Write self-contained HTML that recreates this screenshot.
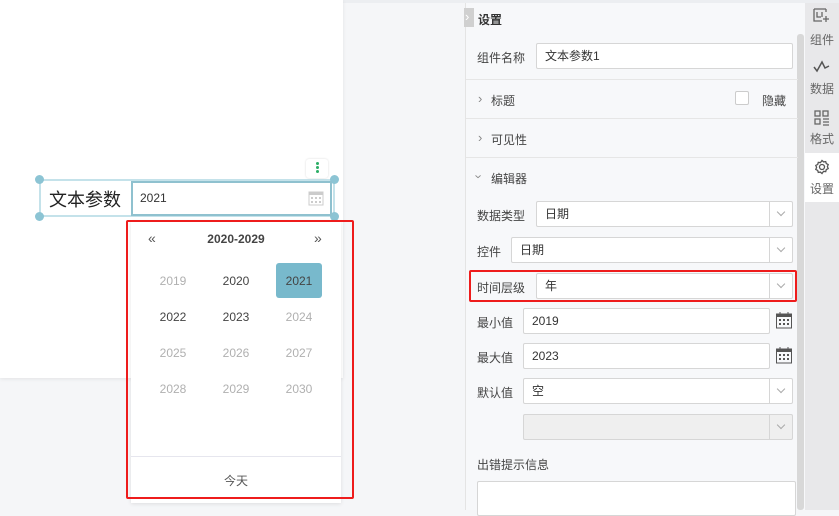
<!DOCTYPE html>
<html><head><meta charset="utf-8"><style>
*{box-sizing:border-box;margin:0;padding:0}
body{width:839px;height:510px;overflow:hidden;background:#f5f6f8;font-family:"Liberation Sans","Noto Sans CJK SC",sans-serif;font-size:12px;color:#333;position:relative}
.a{position:absolute}
.card{left:0;top:0;width:343px;height:378px;background:#fff;box-shadow:0 1px 4px rgba(0,0,0,.08)}
.inp{position:absolute;background:#fff;border:1px solid #d6d6d6;border-radius:2px;font-size:12px;color:#333;padding-left:8px;line-height:25px}
.sel .ar{position:absolute;right:0;top:0;bottom:0;width:23px;border-left:1px solid #d6d6d6}
.sel .ar:after{content:"";position:absolute;left:8px;top:7px;width:5px;height:5px;border-right:1px solid #aaa;border-bottom:1px solid #aaa;transform:rotate(45deg)}
.lbl{position:absolute;font-size:12px;color:#444}
.div{position:absolute;left:466px;width:332px;height:1px;background:#e6e6e6}
.yr{position:absolute;width:46px;text-align:center;font-size:12px;line-height:16px}
.g{color:#b0b0b0}.d{color:#444}
.h{position:absolute;width:9px;height:9px;border-radius:50%;background:#8cc4d4}
.chev{position:absolute;font-size:13px;color:#888}
.tab{position:absolute;left:805px;width:34px;text-align:center;font-size:12px;color:#666}
</style></head><body>
<div class="a" style="left:0;top:0;width:839px;height:3px;background:#eceef1"></div>
<div class="a card"></div>
<div class="a" style="left:39px;top:179px;width:296px;height:38px;border:2px solid #c4e2ea"></div>
<div class="h" style="left:35px;top:175px"></div><div class="h" style="left:330px;top:175px"></div>
<div class="h" style="left:35px;top:212px"></div><div class="h" style="left:330px;top:212px"></div>
<div class="a" style="left:49px;top:186px;font-size:18px;color:#222">文本参数</div>
<div class="a" style="left:131px;top:181px;width:201px;height:35px;border:2px solid #8fc1cf;background:#fff;padding-left:7px;line-height:31px;font-size:12px">2021</div>
<svg class="a" style="left:308px;top:190px" width="16" height="16" viewBox="0 0 16 16"><rect x="1" y="2" width="14" height="13" fill="none" stroke="#ccc"/><rect x="1" y="2" width="14" height="3" fill="#ccc"/><g fill="#ccc"><rect x="3" y="7" width="2" height="2"/><rect x="7" y="7" width="2" height="2"/><rect x="11" y="7" width="2" height="2"/><rect x="3" y="11" width="2" height="2"/><rect x="7" y="11" width="2" height="2"/><rect x="11" y="11" width="2" height="2"/></g></svg>
<div class="a" style="left:306px;top:159px;width:22px;height:19px;background:#fff;border-radius:3px;box-shadow:0 0 2px rgba(0,0,0,.15)"></div>
<div class="a" style="left:316px;top:162px;width:3px;height:3px;border-radius:50%;background:#2bae66;box-shadow:0 4px 0 #2bae66,0 8px 0 #2bae66"></div>
<div class="a" style="left:131px;top:221px;width:210px;height:282px;background:#fff;box-shadow:0 1px 4px rgba(0,0,0,.1)"></div>
<div class="a" style="left:126px;top:220px;width:228px;height:279px;border:2px solid #ee1c1c;border-radius:2px"></div>
<div class="a" style="left:148px;top:230px;font-size:14px;color:#555">«</div>
<div class="a" style="left:314px;top:230px;font-size:14px;color:#555">»</div>
<div class="a" style="left:131px;top:232px;width:210px;text-align:center;font-weight:bold;font-size:12px;color:#444">2020-2029</div>
<div class="a" style="left:276px;top:263px;width:46px;height:35px;background:#78b9cc;border-radius:3px"></div>
<div class="yr g" style="left:150px;top:273px">2019</div><div class="yr d" style="left:213px;top:273px">2020</div><div class="yr d" style="left:276px;top:273px">2021</div>
<div class="yr d" style="left:150px;top:309px">2022</div><div class="yr d" style="left:213px;top:309px">2023</div><div class="yr g" style="left:276px;top:309px">2024</div>
<div class="yr g" style="left:150px;top:345px">2025</div><div class="yr g" style="left:213px;top:345px">2026</div><div class="yr g" style="left:276px;top:345px">2027</div>
<div class="yr g" style="left:150px;top:381px">2028</div><div class="yr g" style="left:213px;top:381px">2029</div><div class="yr g" style="left:276px;top:381px">2030</div>
<div class="a" style="left:131px;top:456px;width:210px;height:1px;background:#e6e6ee"></div>
<div class="a" style="left:131px;top:472px;width:210px;text-align:center;color:#555">今天</div>
<div class="a" style="left:465px;top:3px;width:340px;height:507px;background:#f7f8fa;border-left:1px solid #e4e4e4"></div>
<div class="a" style="left:464px;top:8px;width:10px;height:19px;background:#d0d0d0"></div>
<div class="a" style="left:465px;top:9px;color:#fff;font-size:13px">›</div>
<div class="a" style="left:478px;top:11px;font-size:12px;color:#333;font-weight:bold">设置</div>
<div class="a" style="left:797px;top:34px;width:7px;height:476px;background:#d8d8d8;border-radius:3px"></div>
<div class="a" style="left:805px;top:3px;width:34px;height:507px;background:#e8e8ea"></div>
<div class="a" style="left:805px;top:153px;width:34px;height:49px;background:#fff"></div>
<svg class="a" style="left:813px;top:7px" width="18" height="16" viewBox="0 0 18 16" fill="none" stroke="#666" stroke-width="1.3"><path d="M1 2h12M1 2v12h8M4 5v5h4M9 5v5M13 9v6M10 12h6M13 2v3"/></svg>
<div class="tab" style="top:31px">组件</div>
<svg class="a" style="left:813px;top:60px" width="18" height="14" viewBox="0 0 18 14" fill="none" stroke="#555" stroke-width="1.5"><path d="M1 7l3 4 5-9 3 6 4-2"/></svg>
<div class="tab" style="top:80px">数据</div>
<svg class="a" style="left:813px;top:109px" width="18" height="18" viewBox="0 0 18 18" fill="none" stroke="#666" stroke-width="1.3"><rect x="2" y="2" width="5" height="5"/><rect x="10" y="2" width="5" height="5"/><rect x="2" y="10" width="5" height="5"/><path d="M10 10h6M10 13h6M10 16h6"/></svg>
<div class="tab" style="top:130px">格式</div>
<svg class="a" style="left:814px;top:159px" width="16" height="16" viewBox="0 0 16 16" fill="none" stroke="#555" stroke-width="1.3"><circle cx="8" cy="8" r="2.5"/><path d="M8 1.5l1.6 1.4 2.1-.3.6 2 1.9 1-.8 2 .8 2-1.9 1-.6 2-2.1-.3L8 14.5l-1.6-1.4-2.1.3-.6-2-1.9-1 .8-2-.8-2 1.9-1 .6-2 2.1.3z"/></svg>
<div class="tab" style="top:180px">设置</div>

<div class="lbl" style="left:477px;top:49px">组件名称</div>
<div class="inp" style="left:536px;top:43px;width:257px;height:26px">文本参数1</div>
<div class="div" style="top:79px"></div>
<div class="chev" style="left:478px;top:91px">›</div><div class="lbl" style="left:491px;top:92px">标题</div>
<div class="a" style="left:735px;top:91px;width:14px;height:14px;border:1px solid #ccc;background:#fff;border-radius:2px"></div>
<div class="lbl" style="left:762px;top:92px">隐藏</div>
<div class="div" style="top:118px"></div>
<div class="chev" style="left:478px;top:130px">›</div><div class="lbl" style="left:491px;top:131px">可见性</div>
<div class="div" style="top:157px"></div>
<div class="chev" style="left:477px;top:169px;transform:rotate(90deg)">›</div><div class="lbl" style="left:491px;top:170px">编辑器</div>
<div class="lbl" style="left:477px;top:207px">数据类型</div>
<div class="inp sel" style="left:536px;top:201px;width:257px;height:26px">日期<span class="ar"></span></div>
<div class="lbl" style="left:477px;top:243px">控件</div>
<div class="inp sel" style="left:511px;top:237px;width:282px;height:26px">日期<span class="ar"></span></div>
<div class="a" style="left:469px;top:270px;width:328px;height:32px;border:2px solid #ee1c1c;border-radius:2px"></div>
<div class="lbl" style="left:477px;top:279px">时间层级</div>
<div class="inp sel" style="left:536px;top:273px;width:257px;height:26px">年<span class="ar"></span></div>
<div class="lbl" style="left:477px;top:314px">最小值</div>
<div class="inp" style="left:523px;top:308px;width:247px;height:26px">2019</div>
<div class="lbl" style="left:477px;top:349px">最大值</div>
<div class="inp" style="left:523px;top:343px;width:247px;height:26px">2023</div>
<svg class="a" style="left:776px;top:312px" width="16" height="17" viewBox="0 0 16 17"><rect x="0.5" y="2" width="15" height="14" fill="none" stroke="#555"/><rect x="0.5" y="2" width="15" height="3" fill="#555"/><path d="M4 0v3M12 0v3" stroke="#555"/><g fill="#555"><rect x="3" y="7" width="2" height="2"/><rect x="7" y="7" width="2" height="2"/><rect x="11" y="7" width="2" height="2"/><rect x="3" y="11" width="2" height="2"/><rect x="7" y="11" width="2" height="2"/><rect x="11" y="11" width="2" height="2"/></g></svg>
<svg class="a" style="left:776px;top:347px" width="16" height="17" viewBox="0 0 16 17"><rect x="0.5" y="2" width="15" height="14" fill="none" stroke="#555"/><rect x="0.5" y="2" width="15" height="3" fill="#555"/><path d="M4 0v3M12 0v3" stroke="#555"/><g fill="#555"><rect x="3" y="7" width="2" height="2"/><rect x="7" y="7" width="2" height="2"/><rect x="11" y="7" width="2" height="2"/><rect x="3" y="11" width="2" height="2"/><rect x="7" y="11" width="2" height="2"/><rect x="11" y="11" width="2" height="2"/></g></svg>
<div class="lbl" style="left:477px;top:384px">默认值</div>
<div class="inp sel" style="left:523px;top:378px;width:270px;height:26px">空<span class="ar"></span></div>
<div class="inp sel" style="left:523px;top:414px;width:270px;height:26px;background:#efefef"><span class="ar"></span></div>
<div class="lbl" style="left:477px;top:456px">出错提示信息</div>
<div class="a" style="left:477px;top:481px;width:319px;height:35px;background:#fff;border:1px solid #d6d6d6;border-radius:2px"></div>
</body></html>
